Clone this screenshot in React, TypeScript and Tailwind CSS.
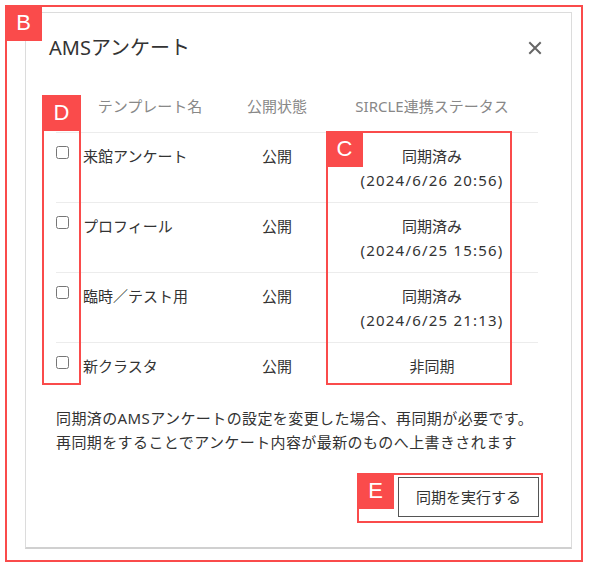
import React from "react";

const rows = [
  { name: "来館アンケート", pub: "公開", status: "同期済み", date: "(2024/6/26 20:56)" },
  { name: "プロフィール", pub: "公開", status: "同期済み", date: "(2024/6/25 15:56)" },
  { name: "臨時／テスト用", pub: "公開", status: "同期済み", date: "(2024/6/25 21:13)" },
  { name: "新クラスタ", pub: "公開", status: "非同期", date: "" },
];

const font = { fontFamily: '"Noto Sans", "Noto Sans CJK JP", sans-serif' };
const labelFont = { fontFamily: '"Liberation Sans", Arial, sans-serif' };

export default function App() {
  return (
    <div
      className="relative w-[589px] h-[568px] bg-white text-[#333] overflow-hidden"
      style={font}
    >
      <div className="pl-[25px] pt-[12px]">
        <div className="w-[547px] h-[537px] border border-[#dcdcdc] border-b-2 border-b-[#d0d0d0] bg-white">
          {/* title row */}
          <div className="flex items-center justify-between pl-[23px] pr-[29px] pt-[21px]">
            <div className="text-[20px] leading-[28px] text-[#333]">AMSアンケート</div>
            <svg width="14" height="14" viewBox="0 0 14 14" className="text-[#666]">
              <path d="M2 2 L12 12 M12 2 L2 12" stroke="currentColor" strokeWidth="2" strokeLinecap="square" />
            </svg>
          </div>

          {/* table */}
          <div className="ml-[30px] mr-[33px] mt-[32px]">
            <div className="grid grid-cols-[24px_140px_114px_196px_8px] text-[15px] leading-6 text-[#888] pb-[14px] border-b border-[#ececec]">
              <div />
              <div className="text-center">テンプレート名</div>
              <div className="text-center">公開状態</div>
              <div className="text-center whitespace-nowrap">SIRCLE連携ステータス</div>
              <div />
            </div>
            {rows.map((r, i) => (
              <div
                key={i}
                className={`grid grid-cols-[24px_140px_114px_196px_8px] text-[15px] leading-6 text-[#333] pt-[11px] pb-[10px] ${
                  i < rows.length - 1 ? "border-b border-[#ececec]" : ""
                }`}
              >
                <div className="pt-[2px]">
                  <input type="checkbox" className="m-0 block w-[13px] h-[13px]" />
                </div>
                <div className="pl-[3px] whitespace-nowrap">{r.name}</div>
                <div className="text-center">{r.pub}</div>
                <div className="text-center">
                  <div>{r.status}</div>
                  {r.date && (
                    <div className="text-[15px] tracking-[1.2px] whitespace-nowrap">
                      {r.date}
                    </div>
                  )}
                </div>
                <div />
              </div>
            ))}
          </div>

          {/* note */}
          <div className="ml-[30px] mt-[18px] text-[15px] leading-6 tracking-[0.4px] text-[#333] whitespace-nowrap">
            <div>同期済のAMSアンケートの設定を変更した場合、再同期が必要です。</div>
            <div>再同期をすることでアンケート内容が最新のものへ上書きされます</div>
          </div>

          <div className="flex justify-end pr-[32px] mt-[23px]">
            <button className="w-[141px] h-[40px] border border-[#555] bg-white text-[15px] text-[#333] flex items-center justify-center">
              同期を実行する
            </button>
          </div>
        </div>
      </div>

      {/* annotation overlays */}
      <div className="absolute left-[5px] top-[5px] w-[578px] h-[557px] border-2 border-[#fa4b4b] pointer-events-none" />
      <div className="absolute left-[5px] top-[5px] w-[37px] h-[36px] bg-[#fa4b4b] text-white text-[22px] leading-[36px] text-center" style={labelFont}>B</div>

      <div className="absolute left-[42px] top-[95px] w-[39px] h-[290px] border-2 border-[#fa4b4b] pointer-events-none" />
      <div className="absolute left-[42px] top-[95px] w-[39px] h-[36px] bg-[#fa4b4b] text-white text-[22px] leading-[36px] text-center" style={labelFont}>D</div>

      <div className="absolute left-[326px] top-[131px] w-[186px] h-[254px] border-2 border-[#fa4b4b] pointer-events-none" />
      <div className="absolute left-[326px] top-[131px] w-[37px] h-[36px] bg-[#fa4b4b] text-white text-[22px] leading-[36px] text-center" style={labelFont}>C</div>

      <div className="absolute left-[357px] top-[473px] w-[186px] h-[50px] border-2 border-[#fa4b4b] pointer-events-none" />
      <div className="absolute left-[357px] top-[473px] w-[37px] h-[36px] bg-[#fa4b4b] text-white text-[22px] leading-[36px] text-center" style={labelFont}>E</div>
    </div>
  );
}
